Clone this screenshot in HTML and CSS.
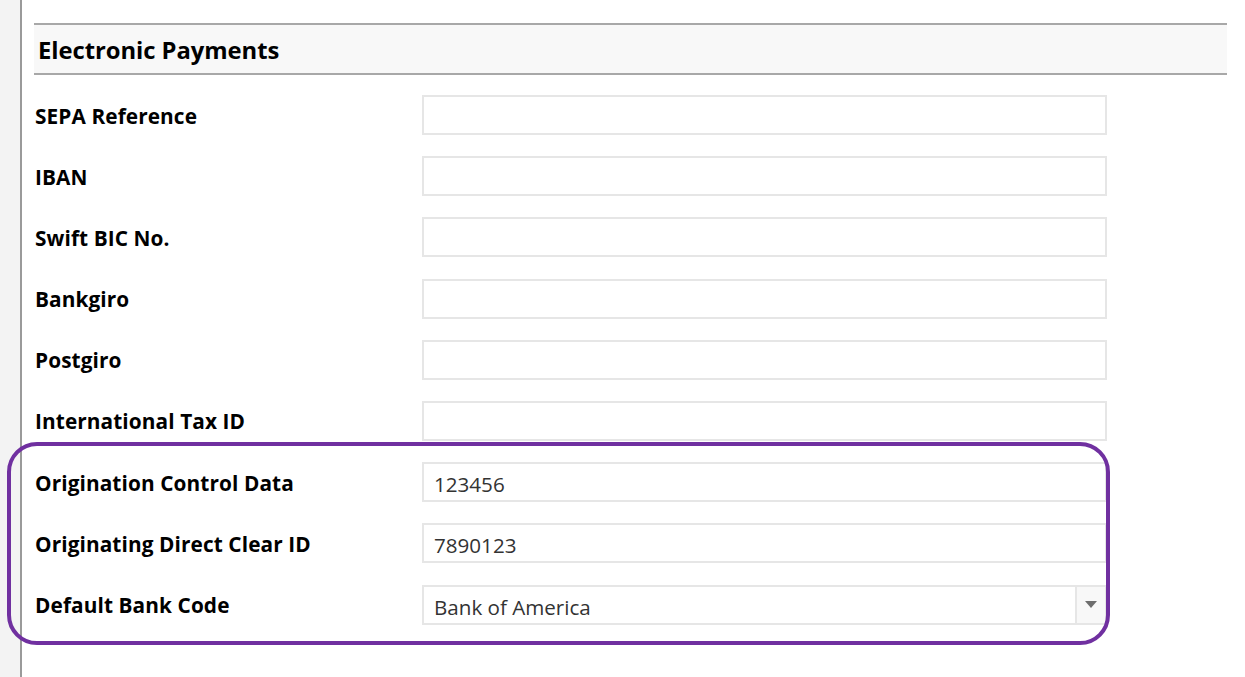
FILE: index.html
```html
<!DOCTYPE html>
<html>
<head>
<meta charset="utf-8">
<link rel="stylesheet" href="styles.css">
</head>
<body>
<div class="page">
  <div class="rail"></div>
  <div class="content">
    <div class="section-head">Electronic Payments</div>
    <div class="form">
      <div class="row"><div class="label">SEPA Reference</div><div class="field"></div></div>
      <div class="row"><div class="label">IBAN</div><div class="field"></div></div>
      <div class="row"><div class="label">Swift BIC No.</div><div class="field"></div></div>
      <div class="row"><div class="label">Bankgiro</div><div class="field"></div></div>
      <div class="row"><div class="label">Postgiro</div><div class="field"></div></div>
      <div class="row"><div class="label">International Tax ID</div><div class="field"></div></div>
      <div class="row"><div class="label">Origination Control Data</div><div class="field">123456</div></div>
      <div class="row"><div class="label">Originating Direct Clear ID</div><div class="field">7890123</div></div>
      <div class="row"><div class="label">Default Bank Code</div><div class="field select"><span class="value">Bank of America</span><span class="drop"><svg width="12" height="7" viewBox="0 0 12 7"><path d="M0 0 H12 L6 7 Z" fill="#6e6e6e"/></svg></span></div></div>
    </div>
  </div>
  <div class="highlight"></div>
</div>
</body>
</html>
```
FILE: styles.css
```css
html, body {
  margin: 0;
  padding: 0;
  background: #ffffff;
}
body {
  font-family: "Open Sans", "Noto Sans", sans-serif;
  color: #000;
}
.page {
  position: relative;
  display: flex;
  width: 1245px;
  height: 677px;
  overflow: hidden;
}
.rail {
  width: 20px;
  flex: none;
  background: #f3f3f3;
  border-right: 2px solid #9a9a9a;
}
.content {
  flex: 1;
  padding: 23px 18px 0 12px;
}
.section-head {
  height: 48px;
  border-top: 2px solid #a8a8a8;
  border-bottom: 2px solid #a8a8a8;
  background: #f8f8f8;
  font-weight: 700;
  font-size: 23.8px;
  line-height: 50px;
  padding-left: 4px;
  letter-spacing: -0.05px;
}
.form {
  display: flex;
  flex-direction: column;
  gap: 21.2px;
  padding-top: 20px;
  padding-left: 1px;
}
.row {
  display: flex;
  align-items: center;
  height: 40px;
}
.label {
  width: 387px;
  flex: none;
  font-weight: 700;
  font-size: 20.8px;
  letter-spacing: 0.1px;
  padding-top: 1px;
}
.field {
  height: 36px;
  border: 2px solid #e6e6e6;
  font-size: 20.6px;
  line-height: 40px;
  padding-left: 10px;
  box-sizing: content-box;
  color: #333;
  width: 671px;
}
.select {
  display: flex;
  padding-left: 10px;
}
.select .value {
  flex: 1;
}
.drop {
  width: 28px;
  border-left: 2px solid #e6e6e6;
  background: #f8f8f8;
  display: flex;
  align-items: center;
  justify-content: center;
}
.highlight {
  position: absolute;
  left: 7px;
  top: 442px;
  width: 1095px;
  height: 195px;
  border: 4px solid #7030a0;
  border-radius: 30px;
}
```
